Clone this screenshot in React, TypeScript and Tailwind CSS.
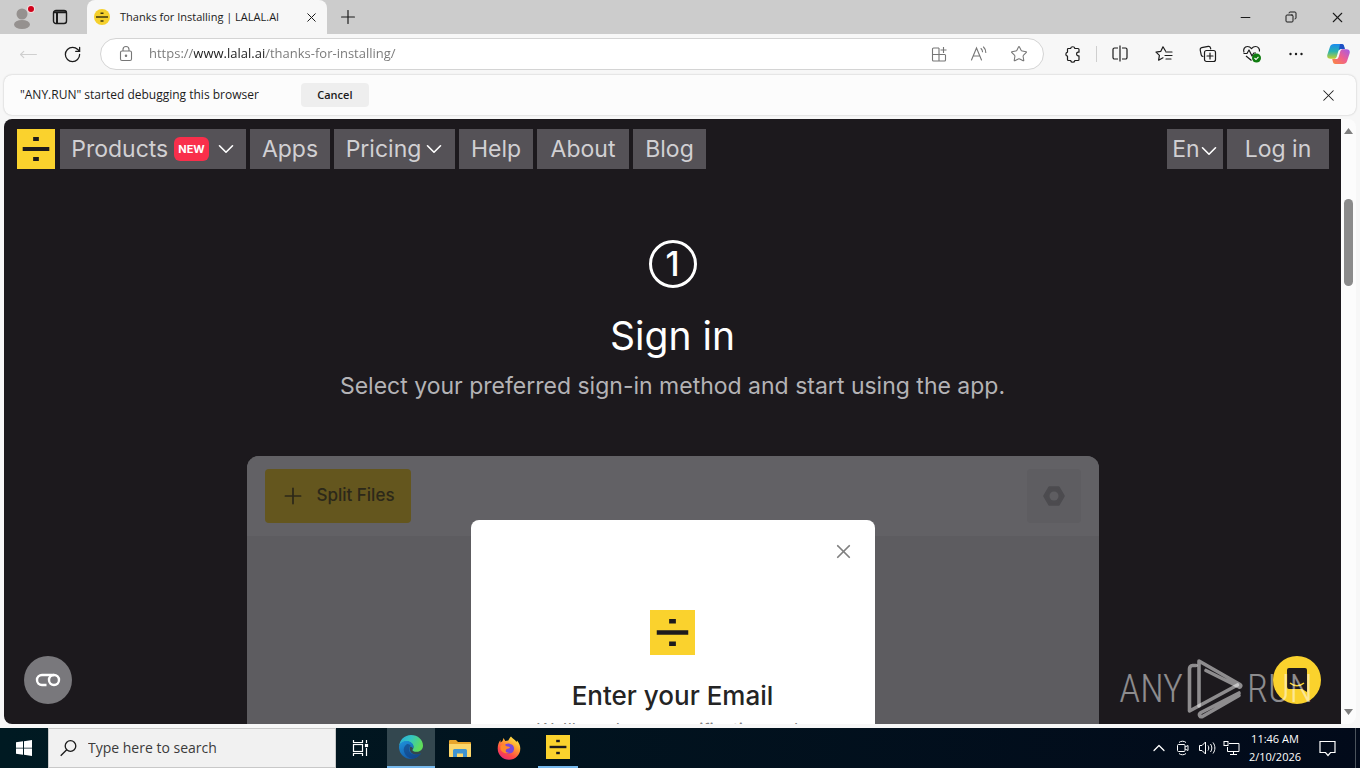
import { ReactNode } from "react";
import {
  ChevronDown,
  ChevronUp,
  Copy,
  Minus,
  MoveLeft,
  Plus,
  RotateCw,
  Star,
  X,
} from "lucide-react";

interface IconButtonProps {
  label: string;
  className?: string;
  children: ReactNode;
}

function IconButton({ label, className = "", children }: IconButtonProps) {
  return (
    <button
      aria-label={label}
      className={`flex shrink-0 items-center justify-center ${className}`}
    >
      {children}
    </button>
  );
}

function Logo({ className = "" }: { className?: string }) {
  return (
    <svg
      viewBox="0 0 40 40"
      preserveAspectRatio="none"
      className={`bg-[#fad22d] ${className}`}
      fill="#1d1a1d"
    >
      <rect x="17" y="8" width="6" height="4" />
      <rect x="6" y="18" width="28" height="4" />
      <rect x="17" y="28" width="6" height="4" />
    </svg>
  );
}

function TabStrip() {
  return (
    <div className="flex h-[34px] shrink-0 items-stretch bg-[#cccccc]">
      <IconButton label="Profile" className="w-11">
        <svg width="26" height="28" viewBox="0 0 26 28">
          <circle cx="13" cy="11" r="5.5" fill="#95918f" />
          <ellipse cx="13" cy="21.5" rx="8" ry="4.5" fill="#95918f" />
          <circle cx="22" cy="6" r="4" fill="#f3dcdc" />
          <circle cx="22" cy="6" r="3" fill="#d0021b" />
        </svg>
      </IconButton>
      <IconButton label="Tab actions" className="w-8">
        <svg
          width="16"
          height="16"
          viewBox="0 0 16 16"
          fill="none"
          stroke="#1b1b1b"
          strokeWidth="1.4"
        >
          <rect x="1.5" y="1.5" width="13" height="13" rx="2.5" />
          <path d="M1.5 3.2h13M5 4v10" strokeWidth="2" />
        </svg>
      </IconButton>
      <div className="ml-[11px] flex w-60 items-center rounded-t-lg bg-[#f7f7f7] pl-[7px] pr-2">
        <svg width="16" height="16" viewBox="0 0 16 16" className="shrink-0">
          <circle cx="8" cy="8" r="8" fill="#f5d02d" />
          <path d="M2 8h12M6.5 4.2h3M6.5 12h3" stroke="#3c340f" strokeWidth="1.4" />
        </svg>
        <span className="ml-[10px] flex-1 whitespace-nowrap text-[11px] text-[#1b1b1b]">
          Thanks for Installing | LALAL.AI
        </span>
        <IconButton label="Close tab" className="size-4">
          <X size={15} strokeWidth={1.6} />
        </IconButton>
      </div>
      <IconButton label="New tab" className="w-[42px]">
        <Plus size={22} strokeWidth={1.3} />
      </IconButton>
      <div className="ml-auto flex">
        <IconButton label="Minimize" className="w-[46px]">
          <Minus size={15} strokeWidth={1.6} />
        </IconButton>
        <IconButton label="Restore" className="w-[46px]">
          <Copy size={12} strokeWidth={2} className="-scale-x-100" />
        </IconButton>
        <IconButton label="Close" className="w-[46px]">
          <X size={17} strokeWidth={1.5} />
        </IconButton>
      </div>
    </div>
  );
}

function CopilotIcon() {
  return (
    <svg width="23" height="22" viewBox="0 0 23 22">
      <defs>
        <linearGradient id="cpA" x1="0" y1="0" x2="0" y2="1">
          <stop offset="0" stopColor="#1b8bf0" />
          <stop offset="0.5" stopColor="#29b2b0" />
          <stop offset="1" stopColor="#c5d12f" />
        </linearGradient>
        <linearGradient id="cpB" x1="1" y1="0" x2="0" y2="1">
          <stop offset="0" stopColor="#a15bea" />
          <stop offset="0.5" stopColor="#ef5f8f" />
          <stop offset="1" stopColor="#fb8a3c" />
        </linearGradient>
      </defs>
      <path
        d="M7 1h7.5c2 0 2.3 1.2 2.8 3l.5 2h-3.5c-2 0-2.6 1-3.100 2.600l-1.400 4.800c-.5 1.700-1.400 2.300-3 2.300H3.500c-3 0-3.800-2-3-4.500l2.500-7.500C3.700 1.800 4.800 1 7 1Z"
        fill="url(#cpA)"
      />
      <path
        d="M16 21H8.500c-2 0-2.300-1.200-2.800-3l-.5-2h3.500c2 0 2.600-1 3.100-2.600l1.400-4.800c.5-1.700 1.400-2.300 3-2.300h3.300c3 0 3.800 2 3 4.500l-2.500 7.500c-.7 1.900-1.800 2.700-4 2.700Z"
        fill="url(#cpB)"
      />
      <path d="M14.500 1c2 0 2.300 1.200 2.800 3l.5 2h-3.500c-1.300 0-2 .4-2.500 1.200L13 1Z" fill="#1f4fc4" />
    </svg>
  );
}

function Toolbar() {
  return (
    <div className="flex h-10 shrink-0 items-center pr-[2px]">
      <IconButton label="Back" className="w-14 text-[#cfcfcf]">
        <MoveLeft size={19} strokeWidth={1.4} />
      </IconButton>
      <IconButton label="Refresh" className="w-8">
        <RotateCw size={19} strokeWidth={1.6} />
      </IconButton>
      <div className="ml-3 flex h-8 flex-1 items-center rounded-full border border-[#d4d4d4] bg-white pl-4 pr-1 text-[#767676]">
        <svg
          width="18"
          height="18"
          viewBox="0 0 18 18"
          fill="none"
          stroke="currentColor"
          strokeWidth="1.1"
        >
          <rect x="3.5" y="6" width="11" height="9.5" rx="1.5" />
          <path d="M6 6V4.500a3 3 0 0 1 6 0V6" />
          <circle cx="9" cy="10.8" r="0.7" fill="currentColor" />
        </svg>
        <input
          aria-label="Address"
          readOnly
          value="https://www.lalal.ai/thanks-for-installing/"
          className="ml-[14px] min-w-0 flex-1 bg-[linear-gradient(90deg,#767676_45px,#1b1b1b_45px,#1b1b1b_117px,#767676_117px)] bg-clip-text text-[13px] text-transparent outline-none"
        />
        <IconButton label="App available" className="w-10">
          <svg
            width="17"
            height="17"
            viewBox="0 0 17 17"
            fill="none"
            stroke="currentColor"
            strokeWidth="1.1"
          >
            <path d="M8 2H2.500a1 1 0 0 0-1 1v11a1 1 0 0 0 1 1h11a1 1 0 0 0 1-1V9M1.500 8.500h13M8 2v13M12.500 1v6M9.500 4h6" />
          </svg>
        </IconButton>
        <IconButton label="Read aloud" className="w-10">
          <svg
            width="18"
            height="18"
            viewBox="0 0 18 18"
            fill="none"
            stroke="currentColor"
            strokeWidth="1.1"
            strokeLinecap="round"
          >
            <path d="m1.500 15 5-12 5 12M3.300 11h6.500M11 3.500c1 .9 1.500 2 1.500 3.300M13.500 2c1.500 1.400 2.300 3.200 2.300 5.500" />
          </svg>
        </IconButton>
        <IconButton label="Add to favorites" className="w-10">
          <Star size={18} strokeWidth={1.4} />
        </IconButton>
      </div>
      <IconButton label="Extensions" className="ml-[7px] w-11">
        <svg
          width="18"
          height="18"
          viewBox="0 0 18 18"
          fill="none"
          stroke="#1b1b1b"
          strokeWidth="1.2"
          strokeLinejoin="round"
        >
          <path d="M4 3.500h2.600a2.200 2.200 0 0 1 4.300 0H14a1 1 0 0 1 1 1v2.700h-1a1.900 1.900 0 0 0 0 3.700h1v3.600a1 1 0 0 1-1 1h-3.100a2.200 2.200 0 0 1-4.300 0H4.500a1 1 0 0 1-1-1v-3.300a2.100 2.100 0 0 1 0-4.100V4.500a1 1 0 0 1 .5-1Z" />
        </svg>
      </IconButton>
      <div className="mx-px h-4 w-px bg-[#cfcfcf]" />
      <IconButton label="Split screen" className="w-11">
        <svg
          width="18"
          height="18"
          viewBox="0 0 18 18"
          fill="none"
          stroke="#1b1b1b"
          strokeWidth="1.2"
        >
          <path d="M7 3H3.500A1.500 1.500 0 0 0 2 4.500v8A1.500 1.500 0 0 0 3.500 14H7M11 3h3.500A1.500 1.500 0 0 1 16 4.500v8a1.500 1.500 0 0 1-1.500 1.500H11M9 .5v16" />
        </svg>
      </IconButton>
      <IconButton label="Favorites" className="w-11">
        <svg
          width="18"
          height="18"
          viewBox="0 0 18 18"
          fill="none"
          stroke="#1b1b1b"
          strokeWidth="1.2"
          strokeLinejoin="round"
          strokeLinecap="round"
        >
          <path d="M10.500 6 8 1.800 5.700 6.400l-4.700.7 3.400 3.300-.8 4.800L8 12.800M11 7h6M10 10.500h7M11 14h5" />
        </svg>
      </IconButton>
      <IconButton label="Collections" className="w-11">
        <svg
          width="18"
          height="18"
          viewBox="0 0 18 18"
          fill="none"
          stroke="#1b1b1b"
          strokeWidth="1.2"
          strokeLinecap="round"
        >
          <path d="M4 11.500c-1-.2-1.600-.8-1.800-1.700L1.200 5c-.2-1.200.3-2 1.500-2.300l6.500-1.300c1.200-.2 2 .3 2.300 1.500l.2 1" />
          <rect x="5.500" y="5.500" width="11" height="11" rx="2" />
          <path d="M11 8v6M8 11h6" />
        </svg>
      </IconButton>
      <IconButton label="Browser essentials" className="w-11">
        <svg width="20" height="20" viewBox="0 0 20 20" fill="none">
          <path
            d="M2 8.500C.8 5.500 2.500 2.500 5.500 2.500c1.800 0 3 .9 4 2.200 1-1.300 2.200-2.200 4-2.200 2.800 0 4.500 2.500 3.900 5M1.500 9.500H5l2-3.500 3 6 1.800-3H14M4 12l5.500 4.500"
            stroke="#1b1b1b"
            strokeWidth="1.2"
            strokeLinejoin="round"
          />
          <circle cx="14.500" cy="14" r="4.500" fill="#107c10" />
          <path d="m12.500 14 1.500 1.500 2.500-2.700" stroke="white" strokeWidth="1.1" />
        </svg>
      </IconButton>
      <IconButton label="Settings and more" className="w-11">
        <svg width="16" height="16" viewBox="0 0 16 16" fill="#1b1b1b">
          <circle cx="2.500" cy="8" r="1.2" />
          <circle cx="8" cy="8" r="1.2" />
          <circle cx="13.500" cy="8" r="1.2" />
        </svg>
      </IconButton>
      <IconButton label="Copilot" className="w-10">
        <CopilotIcon />
      </IconButton>
    </div>
  );
}

function InfoBar() {
  return (
    <div className="mx-1 mt-px flex h-10 shrink-0 items-center rounded-lg bg-[#fcfcfc] pl-4 pr-[18px] shadow-[0_0_2px_rgba(0,0,0,0.25)]">
      <span className="text-xs text-[#1b1b1b]">
        "ANY.RUN" started debugging this browser
      </span>
      <button className="ml-[42px] h-6 w-17 rounded-sm bg-[#eeeeee] text-[11px] font-semibold text-[#1b1b1b]">
        Cancel
      </button>
      <IconButton label="Dismiss" className="ml-auto">
        <X size={19} strokeWidth={1.3} />
      </IconButton>
    </div>
  );
}

const navClass =
  "flex h-10 items-center justify-center bg-[#555257] text-[23px] text-[#d1d0d3]";

function SiteHeader() {
  return (
    <header className="flex items-center gap-1 pl-[13px] pr-3 pt-[10px]">
      <a href="#home" aria-label="LALAL.AI" className="mr-px">
        <Logo className="h-10 w-[38px]" />
      </a>
      <a href="#products" className={`${navClass} w-[186px]`}>
        Products
        <span className="ml-1.5 rounded-md bg-[#f92f4b] px-1 text-[11px] leading-6 font-bold text-white">
          NEW
        </span>
        <ChevronDown size={26} strokeWidth={1.5} className="ml-1 -mr-1 text-white" />
      </a>
      <a href="#apps" className={`${navClass} w-20`}>
        Apps
      </a>
      <a href="#pricing" className={`${navClass} w-[121px]`}>
        Pricing
        <ChevronDown size={26} strokeWidth={1.5} className="-mr-1 text-white" />
      </a>
      <a href="#help" className={`${navClass} w-[74px]`}>
        Help
      </a>
      <a href="#about" className={`${navClass} w-[92px]`}>
        About
      </a>
      <a href="#blog" className={`${navClass} w-[73px]`}>
        Blog
      </a>
      <button className={`${navClass} ml-auto w-14`}>
        En
        <ChevronDown size={26} strokeWidth={1.5} className="-mx-1 mt-1 text-white" />
      </button>
      <a href="#login" className={`${navClass} w-[102px]`}>
        Log in
      </a>
    </header>
  );
}

function AppPreview() {
  return (
    <div className="relative mt-[54px] h-[400px] w-full max-w-[852px] shrink-0 overflow-hidden rounded-t-xl bg-[#5d5c60]">
      <div className="flex h-20 items-center justify-between bg-[#626165] px-[18px]">
        <button className="flex h-[54px] w-[146px] items-center justify-center gap-2.5 rounded bg-[#64561e] text-[17px] font-medium text-[#2c2819]">
          <Plus size={26} strokeWidth={1.6} />
          Split Files
        </button>
        <IconButton
          label="Settings"
          className="size-[54px] rounded bg-[#5e5d61]"
        >
          <svg width="24" height="22" viewBox="0 0 24 22">
            <path
              d="M7.500 2.500h9L21.500 11l-5 8.500h-9L2.500 11Z"
              fill="#4c4b4f"
              stroke="#4c4b4f"
              strokeWidth="2.5"
              strokeLinejoin="round"
            />
            <circle cx="12" cy="11" r="4.500" fill="#5e5d61" />
          </svg>
        </IconButton>
      </div>
      <div className="absolute left-56 top-16 flex h-[380px] w-[404px] flex-col items-center rounded-lg bg-white pt-[90px]">
        <button aria-label="Close dialog" className="absolute right-5 top-5 text-[#808080]">
          <X size={23} strokeWidth={1.8} />
        </button>
        <Logo className="size-[45px]" />
        <h3 className="mt-[25px] text-[26px] leading-8 font-medium text-[#242424]">
          Enter your Email
        </h3>
        <p className="mt-1.5 text-[17px] leading-6 text-[#808080]">
          We'll send you a verification code
        </p>
      </div>
    </div>
  );
}

function Watermark() {
  return (
    <div className="pointer-events-none absolute bottom-1 right-7 flex items-center text-[38px] leading-none font-light text-white/50">
      <span className="font-['Roboto_Condensed','Liberation_Sans_Narrow',Roboto,sans-serif]">
        ANY
      </span>
      <svg
        width="56"
        height="62"
        viewBox="0 0 56 62"
        className="mx-1"
        fill="none"
        stroke="currentColor"
        strokeWidth="3.6"
        strokeLinejoin="round"
        strokeLinecap="round"
      >
        <path d="M9 7.500H5.500C3.500 7.500 2.500 9 2.500 11v42l48-26" />
        <path d="M12 48V3l41 23.500c1.500 1 .5 3-1 2.500L19 12.500" />
        <path d="M52 35 14 54.500c-3 2-1 5 1.500 4L52 37.500" />
      </svg>
      <span className="font-['Roboto_Condensed','Liberation_Sans_Narrow',Roboto,sans-serif]">
        RUN
      </span>
    </div>
  );
}

function Scrollbar() {
  return (
    <div className="flex w-[15px] shrink-0 flex-col items-center bg-[#fcfcfc] py-[9px]">
      <svg width="9" height="6" viewBox="0 0 9 6" fill="#7f7f7f">
        <path d="M4.500 0 9 6H0Z" />
      </svg>
      <div className="mt-[65px] h-[87px] w-[9px] rounded-full bg-[#8b8b8b]" />
      <svg width="9" height="6" viewBox="0 0 9 6" fill="#7f7f7f" className="mt-auto">
        <path d="M4.500 6 0 0h9Z" />
      </svg>
    </div>
  );
}

function SitePage() {
  return (
    <div className="m-1 flex min-h-0 flex-1 overflow-hidden rounded-lg">
      <div className="relative min-w-0 flex-1 overflow-hidden bg-[#1c191d] font-[Inter,sans-serif]">
        <SiteHeader />
        <main className="flex flex-col items-center pt-[71px]">
          <div className="flex size-12 items-center justify-center rounded-full border-3 border-white text-[34px] leading-none font-medium text-white">
            1
          </div>
          <h2 className="mt-6 text-[39px] leading-12 text-white">Sign in</h2>
          <p className="mt-2.5 text-[23px] leading-8 text-[#b4b3b6]">
            Select your preferred sign-in method and start using the app.
          </p>
          <AppPreview />
        </main>
        <IconButton
          label="Cookie settings"
          className="absolute bottom-5 left-5 size-12 rounded-full bg-[#79787c]"
        >
          <svg
            width="26"
            height="14"
            viewBox="0 0 26 14"
            fill="none"
            stroke="white"
            strokeWidth="2.4"
          >
            <path d="M11.500 12H7A5 5 0 0 1 7 2h12" />
            <circle cx="19" cy="7" r="5" />
          </svg>
        </IconButton>
        <IconButton
          label="Open chat"
          className="absolute bottom-5 right-5 size-12 rounded-full bg-[#fad22d]"
        >
          <svg width="24" height="26" viewBox="0 0 24 26">
            <path d="M4 1h16a2 2 0 0 1 2 2v22l-5-3H4a2 2 0 0 1-2-2V3a2 2 0 0 1 2-2Z" fill="#1d1a1d" />
            <path d="M5 16c4 3.500 10 3.500 14 0" stroke="#fad22d" strokeWidth="1.5" fill="none" />
          </svg>
        </IconButton>
        <Watermark />
      </div>
      <Scrollbar />
    </div>
  );
}

function EdgeIcon() {
  return (
    <svg width="24" height="24" viewBox="0 0 24 24">
      <defs>
        <linearGradient id="edgeTop" x1="0" y1="0" x2="1" y2="0.4">
          <stop offset="0" stopColor="#28a9dc" />
          <stop offset="0.5" stopColor="#34c6c0" />
          <stop offset="1" stopColor="#5fdc5a" />
        </linearGradient>
        <linearGradient id="edgeBody" x1="0" y1="0" x2="0.6" y2="1">
          <stop offset="0" stopColor="#1f94dc" />
          <stop offset="1" stopColor="#1256a5" />
        </linearGradient>
      </defs>
      <path
        d="M0 11.500C.5 5 5.500 0 12 0c7 0 12 5 12 10.500 0 4-3 6.300-6.500 6.300-2.500 0-4-.8-4-1.800 0-.7 1-1.200 1-3C14.500 9 11.500 6.500 8 6.500c-4 0-7 2-8 5Z"
        fill="url(#edgeTop)"
      />
      <path
        d="M0 12c.5-4 4-6 7.500-6 4 0 7 2.500 7 5.500 0 .8-.3 1.500-.6 2-.8-1.500-2-2-3-1.500-1 3 1 7 5.600 7.500 2 .2 4-.3 5.500-1.200-2 3.500-5.500 5.700-10 5.700A12 12 0 0 1 0 12Z"
        fill="url(#edgeBody)"
      />
      <path
        d="M8 9c-3 2-4 5-2.800 8 1 3.500 4.300 6.300 8.300 6.800 3.500-.3 6.500-2.200 8.500-5.200-6 3-12.500.4-12-5 .3-1.600 1-2.300 1.700-2.800C11 9.500 9.500 8.700 8 9Z"
        fill="#123f7f"
        opacity="0.6"
      />
    </svg>
  );
}

function FirefoxIcon() {
  return (
    <svg width="24" height="24" viewBox="0 0 24 24">
      <defs>
        <linearGradient id="ffBody" x1="0.8" y1="0" x2="0.2" y2="1">
          <stop offset="0" stopColor="#fff04c" />
          <stop offset="0.35" stopColor="#ffa430" />
          <stop offset="0.7" stopColor="#ff4a45" />
          <stop offset="1" stopColor="#e8267c" />
        </linearGradient>
      </defs>
      <path
        d="M14 .5c1 2 4 3 5.500 5.500l.5-1.500c2 2 3.300 5 3.300 8A11.300 11.300 0 0 1 12 23.800 11.300 11.300 0 0 1 .7 12.500c0-3.500 1-6.500 2.800-8.500v2.500L5.500 5 6.500 2l1.800 3 3-.5C12 3 13 1.500 14 .5Z"
        fill="url(#ffBody)"
      />
      <path
        d="M7.500 10c1-2.500 4-3 5.500-2 3 .2 4.500 3 4 5.500-.5 3-3 4-5 4-3 0-5.500-2-5.500-4.500l5-.5c1 0 1.500-1 1-1.500Z"
        fill="#7a48d8"
      />
      <path
        d="M3.500 10c2-2 5-1.500 6 .5 1 .5 2.500 0 3 .5-.2 1.500-2.500 1.200-3.500 2.700-1 1.800.5 3.300 3 2.800-2 1.800-7 .5-8.500-3Z"
        fill="#ff8a2a"
      />
    </svg>
  );
}

function ExplorerIcon() {
  return (
    <svg width="22" height="19" viewBox="0 0 22 19">
      <path
        d="M0 2a1 1 0 0 1 1-1h6l2 2h12a1 1 0 0 1 1 1v13a1 1 0 0 1-1 1H1a1 1 0 0 1-1-1Z"
        fill="#e8a52b"
      />
      <path d="M0 5h22v12a1 1 0 0 1-1 1H1a1 1 0 0 1-1-1Z" fill="#fcd76b" />
      <path
        d="M4 18v-6.500A1.500 1.500 0 0 1 5.500 10h11a1.500 1.500 0 0 1 1.500 1.500V18h-4v-3.500H8V18Z"
        fill="#3f94d1"
      />
    </svg>
  );
}

function Taskbar() {
  return (
    <footer className="flex h-10 shrink-0 items-stretch bg-gradient-to-r from-[#001a22] to-[#020a1a] text-white">
      <IconButton label="Start" className="w-12">
        <svg width="16" height="16" viewBox="0 0 16 16" fill="white">
          <path d="M0 2.300 7 1.300v6.400H0ZM8 1.200 16 0v7.700H8ZM0 8.500h7v6.300l-7-1ZM8 8.500h8V16l-8-1.200Z" />
        </svg>
      </IconButton>
      <label className="flex w-72 items-center border border-[#c8c8c8] bg-[#f1f1f1] pl-[11px] text-[#1b1b1b]">
        <svg
          width="17"
          height="17"
          viewBox="0 0 17 17"
          fill="none"
          stroke="#1b1b1b"
          strokeWidth="1.3"
        >
          <circle cx="10.500" cy="6" r="5.300" />
          <path d="m6.700 9.800-6 6" />
        </svg>
        <input
          aria-label="Search"
          placeholder="Type here to search"
          className="ml-[11px] min-w-0 flex-1 bg-transparent text-sm outline-none placeholder:text-[#3b3b3b]"
        />
      </label>
      <IconButton label="Task view" className="ml-px w-[46px]">
        <svg
          width="17"
          height="16"
          viewBox="0 0 17 16"
          fill="none"
          stroke="white"
          strokeWidth="1.2"
        >
          <path d="M1.500 0v2.500h9V0M1.500 16v-2.500h9V16M14.500 0v3M14.500 8v8" />
          <rect x="1.500" y="4.500" width="9" height="7" />
          <rect x="13.500" y="4.500" width="2" height="2" fill="white" />
        </svg>
      </IconButton>
      <div className="ml-1 flex gap-px">
        <IconButton label="Microsoft Edge" className="w-12 border-b-2 border-[#76b9ed] bg-[#33474f]">
          <EdgeIcon />
        </IconButton>
        <IconButton label="File Explorer" className="w-12">
          <ExplorerIcon />
        </IconButton>
        <IconButton label="Firefox" className="w-12">
          <FirefoxIcon />
        </IconButton>
        <IconButton label="LALAL.AI" className="mx-1 w-10 border-b-2 border-[#76b9ed]">
          <Logo className="size-6" />
        </IconButton>
      </div>
      <div className="ml-auto flex items-stretch">
        <IconButton label="Show hidden icons" className="w-6">
          <ChevronUp size={20} strokeWidth={1.5} />
        </IconButton>
        <IconButton label="Meet now" className="w-6">
          <svg width="14" height="16" viewBox="0 0 14 16" fill="none" stroke="white">
            <rect x="1.500" y="4.500" width="7.500" height="7" rx="1" />
            <path d="m9 7 3-1.500v5L9 9M3 2.500C5 .8 8 .8 10 2.500M3 13.500c2 1.700 5 1.700 7 0" />
          </svg>
        </IconButton>
        <IconButton label="Volume" className="w-6">
          <svg width="17" height="16" viewBox="0 0 17 16" fill="none" stroke="white">
            <path d="M.5 5.500H3l3.500-3.500v12L3 10.500H.5ZM9 5.500c1 1.500 1 3.500 0 5M11.500 4c1.800 2.500 1.800 5.500 0 8M14 2.500c2.500 3.500 2.500 7.500 0 11" />
          </svg>
        </IconButton>
        <IconButton label="Network" className="w-6">
          <svg width="17" height="16" viewBox="0 0 17 16" fill="none" stroke="white">
            <path d="M6 3.500h10v8H4.500V7M10.500 11.500v3M7 14.500h7" />
            <rect x="1" y="1.500" width="4" height="4" />
          </svg>
        </IconButton>
        <div className="flex w-16 flex-col items-center justify-center whitespace-nowrap text-[11px] leading-[18px]">
          <span>11:46 AM</span>
          <span>2/10/2026</span>
        </div>
        <IconButton label="Notifications" className="w-10">
          <svg
            width="17"
            height="17"
            viewBox="0 0 17 17"
            fill="none"
            stroke="white"
            strokeWidth="1.2"
          >
            <path d="M1 1.500h15v11h-4.500L9 15.500l-2.500-3H1Z" />
          </svg>
        </IconButton>
        <div className="ml-2 w-[5px] border-l border-[#4b535c]" />
      </div>
    </footer>
  );
}

export default function App() {
  return (
    <div className="flex h-screen flex-col overflow-hidden bg-[#f7f7f7] font-['Open_Sans','Noto_Sans',sans-serif] text-[#1b1b1b]">
      <TabStrip />
      <Toolbar />
      <InfoBar />
      <SitePage />
      <Taskbar />
    </div>
  );
}
